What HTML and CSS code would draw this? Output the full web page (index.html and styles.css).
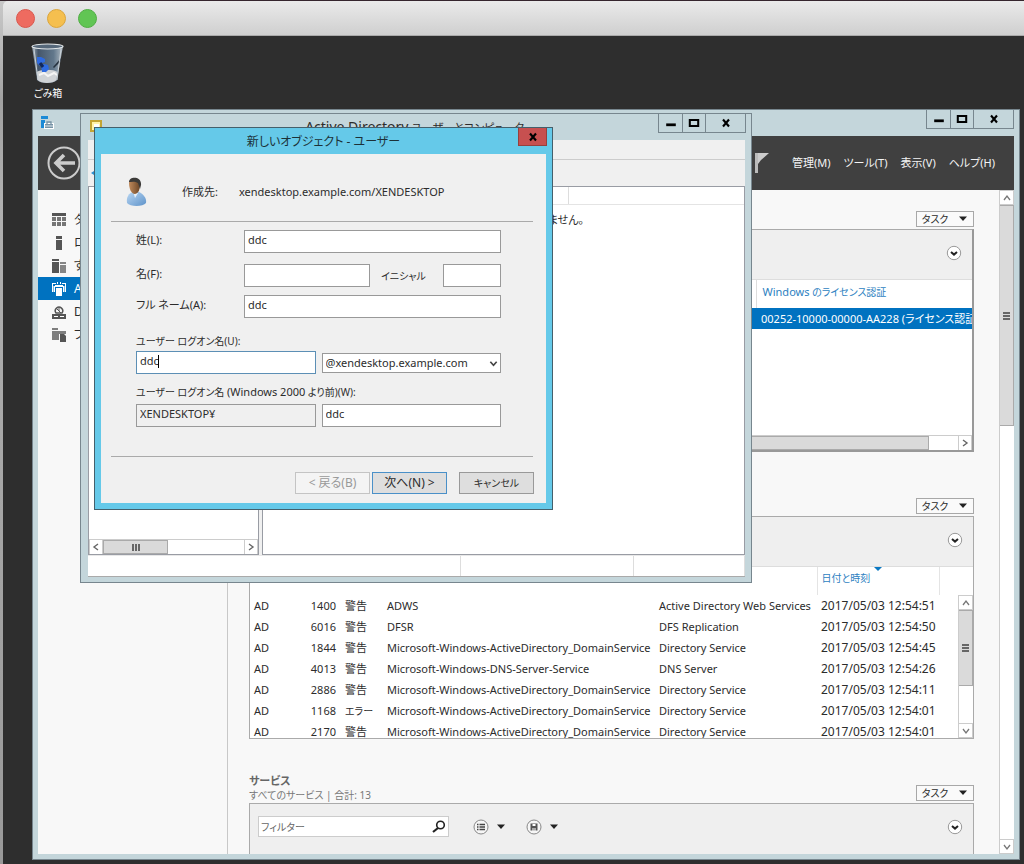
FILE: index.html
```html
<!DOCTYPE html>
<html lang="ja">
<head>
<meta charset="utf-8">
<title>新しいオブジェクト - ユーザー</title>
<link rel="stylesheet" href="styles.css">
</head>
<body>
<svg class="defs" width="0" height="0" aria-hidden="true">
  <symbol id="min" viewBox="0 0 10 10"><path d="M1 6.500h8" stroke="#000" stroke-width="2.300"/></symbol>
  <symbol id="max" viewBox="0 0 10 10"><path d="M1.500 2.500h7v5h-7z" fill="none" stroke="#000" stroke-width="1.700"/></symbol>
  <symbol id="close" viewBox="0 0 10 10"><path d="M2 1.500L8 8.500M8 1.500L2 8.500" stroke="#000" stroke-width="2.100"/></symbol>
  <symbol id="down" viewBox="0 0 10 10"><path d="M2 3l3 4 3-4" fill="none" stroke="#777" stroke-width="1.300"/></symbol>
  <symbol id="up" viewBox="0 0 10 10"><path d="M2 7l3-4 3 4" fill="none" stroke="#777" stroke-width="1.300"/></symbol>
  <symbol id="left" viewBox="0 0 10 10"><path d="M7 2L3 5l4 3" fill="none" stroke="#666" stroke-width="1.400"/></symbol>
  <symbol id="right" viewBox="0 0 10 10"><path d="M3 2l4 3-4 3" fill="none" stroke="#666" stroke-width="1.400"/></symbol>
  <symbol id="tri" viewBox="0 0 10 6"><path d="M1 0.500h8L5 5z" fill="#222"/></symbol>
  <symbol id="expand" viewBox="0 0 16 16"><circle cx="8" cy="8" r="6.700" fill="#fff" stroke="#999"/><path d="M5 7l3 2.600L11 7" fill="none" stroke="#222" stroke-width="2"/></symbol>
</svg>

<header class="macbar"><i class="dot red"></i><i class="dot yellow"></i><i class="dot green"></i></header>

<main class="desktop">
  <div class="trash">
    <svg width="34" height="42" viewBox="0 0 34 42">
      <defs><linearGradient id="bin" x2="1"><stop offset="0" stop-color="#a7b4bf"/><stop offset=".2" stop-color="#45566a"/><stop offset=".7" stop-color="#62788c"/><stop offset="1" stop-color="#b4bec6"/></linearGradient></defs>
      <path d="M1 3l5 34c3 4 17 4 20 0L32 3z" fill="url(#bin)"/>
      <path d="M5.500 29c5-3 17-3 21 0l-1 8c-3 4-16 4-19 0z" fill="#d0d3d6"/>
      <path d="M8 32l5-2 4 3 6-3 3 2" fill="none" stroke="#f4f4f4" stroke-width="2"/>
      <path d="M6 14l4 0 4 2v3l-3 1-2 3-3-3zM10 22l3-1 4 1 1 4-3 3h-4z" fill="#2f6be0"/><path d="M9 20l3 4" stroke="#10275c" stroke-width="3"/>
      <path d="M22 24l8-9-1 4-6 6z" fill="#26323f"/>
      <ellipse cx="16.500" cy="3.500" rx="15.500" ry="2.500" fill="#56687a" stroke="#e4e8ea" stroke-width="1.200"/>
      <path d="M3 6l4 31M30 6l-4 31" stroke="#c8d0d6" stroke-width="1"/>
    </svg>
    <span>ごみ箱</span>
  </div>

  <section class="win server">
    <div class="titlebar">
      <svg width="14" height="14" viewBox="0 0 14 14"><path d="M1 1h7v3H1zM1 5h4v8H1z" fill="#1c8ad6"/><path d="M4 8h10v6H4z" fill="#fff"/><path d="M5 9h8v4H5z" fill="#7793a5"/><path d="M7 9V7h4v2" fill="none" stroke="#7793a5" stroke-width="1.300"/><path d="M5 11h8" stroke="#dde7ec"/></svg>
      <div class="winbtns">
        <button aria-label="最小化"><svg width="12" height="12"><use href="#min"/></svg></button><button aria-label="最大化"><svg width="12" height="12"><use href="#max"/></svg></button><button class="wide" aria-label="閉じる"><svg width="10" height="10"><use href="#close"/></svg></button>
      </div>
    </div>
    <div class="navbar">
      <button class="back" aria-label="戻る"><svg width="34" height="34" viewBox="0 0 34 34"><circle cx="17" cy="17" r="15.500" fill="none" stroke="#ccc" stroke-width="2"/><path d="M28 17H9M17 9l-8 8 8 8" fill="none" stroke="#ccc" stroke-width="3.600"/></svg></button>
      <nav>
        <svg width="16" height="22" viewBox="0 0 16 22"><path d="M1 1h3v20H1z" fill="#bbb"/><path d="M4 1h11L7 8l-3 4z" fill="#ccc"/></svg>
        <a href="#">管理(M)</a><a href="#">ツール(T)</a><a href="#">表示(V)</a><a href="#">ヘルプ(H)</a>
      </nav>
    </div>
    <div class="body">
      <aside>
        <a href="#"><svg viewBox="0 0 14 14"><path d="M0 0h14v3H0z"/><path d="M0 4h4v4H0zM5 4h4v4H5zM10 4h4v4h-4zM0 9h4v4H0zM5 9h4v4H5zM10 9h4v4h-4z" opacity=".8"/></svg>ダ</a>
        <a href="#"><svg viewBox="0 0 14 14"><path d="M4 0h6v3H4zM4 4h6v10H4z"/></svg>ロ</a>
        <a href="#"><svg viewBox="0 0 14 14"><path d="M0 0h7v2H0zM0 3h7v11H0z"/><path d="M8 3h6v2H8zM8 6h6v8H8z" opacity=".7"/></svg>す</a>
        <a href="#" class="on"><svg viewBox="0 0 14 14"><path d="M3 3h8v2H3zM4 6h6v8H4z"/><path d="M0 1h4v1H1v8H0zM14 1h-4v1h3v8h1zM1.500 4H3v6H1.500zM11 4h1.500v6H11zM5 0h1v2H5zM8 0h1v2H8z"/></svg>A</a>
        <a href="#"><svg viewBox="0 0 14 14"><path d="M0 9h14v5H0z"/><path d="M4 8a3.700 3.700 0 1 1 6 0z" fill="none" stroke="#555" stroke-width="1.500"/><path d="M5 4l4 4M7 2v4" stroke="#555"/><path d="M2 11.500h4M8 11.500h4" stroke="#fff"/></svg>D</a>
        <a href="#"><svg viewBox="0 0 14 14"><path d="M0 0h6v2H0zM0 3h14v3H7v6H0z" opacity=".75"/><path d="M8 6h4l2 2v6H8z"/></svg>フ</a>
      </aside>
      <div class="content">
        <section class="tile">
          <div class="tilehead"><button class="task">タスク<svg width="10" height="6"><use href="#tri"/></svg></button></div>
          <div class="panel thick">
            <div class="tools"><button class="round" aria-label="展開"><svg width="16" height="16"><use href="#expand"/></svg></button></div>
            <table class="license"><colgroup><col><col class="c-lic"></colgroup>
              <thead><tr><th></th><th><span class="latin">Windows</span> のライセンス認証</th></tr></thead>
              <tbody><tr><td></td><td><span class="latin">00252-10000-00000-AA228</span> (ライセンス認証</td></tr></tbody></table>
            <div class="hbar"><i class="thumb grow"></i><i class="track"></i><button aria-label="右"><svg width="10" height="10"><use href="#right"/></svg></button></div>
          </div>
        </section>
        <section class="tile">
          <div class="tilehead"><button class="task">タスク<svg width="10" height="6"><use href="#tri"/></svg></button></div>
          <div class="panel">
            <div class="tools"><button class="round" aria-label="展開"><svg width="16" height="16"><use href="#expand"/></svg></button></div>
            <div class="scroller">
            <table class="events"><colgroup><col class="c1"><col class="c2"><col class="c3"><col class="c4"><col class="c5"><col class="c6"><col></colgroup>
              <thead><tr><th></th><th></th><th></th><th></th><th></th><th class="date">日付と時刻<svg class="sort" width="8" height="5"><path d="M0 0h8L4 4z" fill="#0a78c2"/></svg></th><th class="end"></th></tr></thead>
              <tbody>
              <tr><td>AD</td><td>1400</td><td>警告</td><td>ADWS</td><td>Active Directory Web Services</td><td>2017/05/03 12:54:51</td><td></td></tr>
              <tr><td>AD</td><td>6016</td><td>警告</td><td>DFSR</td><td>DFS Replication</td><td>2017/05/03 12:54:50</td><td></td></tr>
              <tr><td>AD</td><td>1844</td><td>警告</td><td>Microsoft-Windows-ActiveDirectory_DomainService</td><td>Directory Service</td><td>2017/05/03 12:54:45</td><td></td></tr>
              <tr><td>AD</td><td>4013</td><td>警告</td><td>Microsoft-Windows-DNS-Server-Service</td><td>DNS Server</td><td>2017/05/03 12:54:26</td><td></td></tr>
              <tr><td>AD</td><td>2886</td><td>警告</td><td>Microsoft-Windows-ActiveDirectory_DomainService</td><td>Directory Service</td><td>2017/05/03 12:54:11</td><td></td></tr>
              <tr><td>AD</td><td>1168</td><td class="jp">エラー</td><td>Microsoft-Windows-ActiveDirectory_DomainService</td><td>Directory Service</td><td>2017/05/03 12:54:01</td><td></td></tr>
              <tr><td>AD</td><td>2170</td><td>警告</td><td>Microsoft-Windows-ActiveDirectory_DomainService</td><td>Directory Service</td><td>2017/05/03 12:54:01</td><td></td></tr>
              </tbody></table>
            <div class="vbar inner"><button aria-label="上"><svg width="10" height="10"><use href="#up"/></svg></button><i class="thumb"><b class="grip"></b></i><i class="track"></i><button aria-label="下"><svg width="10" height="10"><use href="#down"/></svg></button></div>
            </div>
          </div>
        </section>
        <section class="tile">
          <div class="tilehead"><div><h2>サービス</h2><p>すべてのサービス | 合計: 13</p></div><button class="task">タスク<svg width="10" height="6"><use href="#tri"/></svg></button></div>
          <div class="panel">
            <div class="tools filter">
              <label class="search"><input type="text" placeholder="フィルター" aria-label="フィルター"><svg width="14" height="14" viewBox="0 0 14 14"><circle cx="8.500" cy="5" r="3.800" fill="none" stroke="#222" stroke-width="1.600"/><path d="M6 8l-5 4" stroke="#222" stroke-width="2.200"/></svg></label>
              <button class="menu" aria-label="一覧"><svg width="16" height="16" viewBox="0 0 16 16"><circle cx="8" cy="8" r="7" fill="#f6f6f6" stroke="#888"/><path d="M4 5.500h1.500M4 8h1.500M4 10.500h1.500M6.500 5.500H12M6.500 8H12M6.500 10.500H12" stroke="#444" stroke-width="1.300"/></svg><svg width="10" height="6"><use href="#tri"/></svg></button>
              <button class="menu" aria-label="保存"><svg width="16" height="16" viewBox="0 0 16 16"><circle cx="8" cy="8" r="7" fill="#f6f6f6" stroke="#888"/><path d="M4.500 4.500h7v7h-7z" fill="#555"/><path d="M6.500 5h3v2h-3zM6.500 9h1v3h-1zM8.500 9h1v3h-1z" fill="#fff"/></svg><svg width="10" height="6"><use href="#tri"/></svg></button>
              <button class="round" aria-label="展開"><svg width="16" height="16"><use href="#expand"/></svg></button>
            </div>
          </div>
        </section>
      </div>
      <div class="vbar"><button aria-label="上"><svg width="10" height="10"><use href="#up"/></svg></button><i class="thumb"><b class="grip"></b></i><i class="track"></i><button aria-label="下"><svg width="10" height="10"><use href="#down"/></svg></button></div>
    </div>
  </section>

  <section class="win directory">
    <div class="titlebar">
      <svg width="12" height="12" viewBox="0 0 12 12"><path d="M1 1h10v10H1z" fill="#fff3a8" stroke="#c4a534" stroke-width="2"/><path d="M4 4h5v3H4z" fill="#fff"/></svg>
      <h1><span class="latin">Active Directory</span> ユーザーとコンピューター</h1>
      <div class="winbtns">
        <button aria-label="最小化"><svg width="12" height="12"><use href="#min"/></svg></button><button aria-label="最大化"><svg width="12" height="12"><use href="#max"/></svg></button><button class="wide" aria-label="閉じる"><svg width="10" height="10"><use href="#close"/></svg></button>
      </div>
    </div>
    <div class="strip menus"></div>
    <div class="strip bar"><svg width="8" height="10" viewBox="0 0 8 10"><path d="M0 5l6-4v8z" fill="#2a8fd0"/></svg></div>
    <div class="panes">
      <div class="tree"><div class="hbar"><button aria-label="左"><svg width="10" height="10"><use href="#left"/></svg></button><i class="thumb"><b class="grip v"></b></i><i class="track"></i><button aria-label="右"><svg width="10" height="10"><use href="#right"/></svg></button></div></div>
      <div class="list"><div class="listhead"></div><p>ません。</p></div>
    </div>
    <div class="status"><i></i><i></i><i></i></div>
  </section>

  <section class="dialog" role="dialog" aria-label="新しいオブジェクト - ユーザー">
    <div class="dtitle"><h1>新しいオブジェクト - ユーザー</h1><button class="dclose" aria-label="閉じる"><svg width="10" height="10"><use href="#close"/></svg></button></div>
    <form class="dbody">
      <div class="where">
        <svg width="24" height="30" viewBox="0 0 24 30">
          <defs><linearGradient id="shirt" x2="1" y2="1"><stop offset="0" stop-color="#b9d6f2"/><stop offset="1" stop-color="#5e93ca"/></linearGradient><linearGradient id="skin" x2="1"><stop offset="0" stop-color="#c08a5c"/><stop offset="1" stop-color="#6b4526"/></linearGradient></defs>
          <path d="M2 26c-1-6 2-10 6-11h6c4 2 8 6 7 11-3 4-16 4-19 0z" fill="url(#shirt)"/>
          <path d="M8 14l2 7 3-5z" fill="#e8f1fa"/>
          <path d="M4 6c0-5 10-6 11 0 0 6-1 10-5 11-4 0-6-6-6-11z" fill="url(#skin)"/>
          <path d="M4 5C4-1 17-1 16 8l-1 4-2-6C10 4 6 5 4 5z" fill="#3c3a38"/>
        </svg>
        <span class="wl">作成先:</span><span class="en">xendesktop.example.com/XENDESKTOP</span>
      </div>
      <div class="fields">
        <div class="row"><label for="sn">姓(L):</label><input id="sn" type="text" value="ddc"></div>
        <div class="row second"><label for="gn">名(F):</label><input id="gn" type="text"><label for="ini" class="ini">イニシャル</label><input id="ini" class="short" type="text"></div>
        <div class="row"><label for="fn">フル ネーム(A):</label><input id="fn" type="text" value="ddc"></div>
        <label class="over" for="logon">ユーザー ログオン名(U):</label>
        <div class="pair"><span class="caretbox"><input id="logon" class="focus" type="text" value="ddc"><i class="caret"></i></span><span class="combo"><select aria-label="ドメイン"><option>@xendesktop.example.com</option></select><svg width="9" height="9" viewBox="0 0 10 10"><path d="M1.500 3L5 7l3.500-4" fill="none" stroke="#444" stroke-width="1.800"/></svg></span></div>
        <label class="over" for="old">ユーザー ログオン名 <span class="en">(Windows 2000</span> より前)(W):</label>
        <div class="pair"><input class="ro" type="text" value="XENDESKTOP¥" readonly aria-label="NetBIOS ドメイン"><input id="old" type="text" value="ddc"></div>
      </div>
      <div class="actions"><button type="button" disabled>&lt; 戻る(B)</button><button type="button" class="primary">次へ(N) &gt;</button><button type="button" class="cancel">キャンセル</button></div>
    </form>
  </section>
</main>
</body>
</html>
```
FILE: styles.css
```css
* { box-sizing: border-box; }
html, body { height: 100%; }
body {
  margin: 0;
  padding: 1px 0 0 3px;
  display: flex;
  flex-direction: column;
  overflow: hidden;
  background: linear-gradient(#35252d 1px, #c8c8c8 1px, #b4b4b4 60px, #a2a2a2 100px, #b0b0b0 200px, #999);
  font: 12px/16px "Noto Sans", "Noto Sans CJK JP", sans-serif;
  font-feature-settings: "palt";
  color: #2c2c2c;
}
h1, h2, p { margin: 0; font-weight: 400; }
button, input, select { font: inherit; font-feature-settings: inherit; color: inherit; margin: 0; padding: 0; border-radius: 0; }
button { display: flex; align-items: center; justify-content: center; background: none; border: 0; }
a { color: inherit; text-decoration: none; }
svg { display: block; flex: none; }
.defs { position: absolute; }
.en { font-size: 11px; }

.macbar {
  flex: none;
  height: 35px;
  display: flex;
  align-items: center;
  gap: 12px;
  padding-left: 13px;
  border-radius: 5px 0 0 0;
  background: linear-gradient(#eaeaea, #cfcfcf);
  border-bottom: 1px solid #aaa;
}
.dot { width: 19px; height: 19px; border-radius: 50%; border: 1px solid; }
.red { background: #ee6b60; border-color: #d9574d; }
.yellow { background: #f5bf4f; border-color: #dba53b; }
.green { background: #61c554; border-color: #4fae43; }

.desktop { flex: 1; position: relative; background: #2e2e2e; overflow: hidden; }
.trash { width: 60px; margin: 7px 0 0 15px; display: flex; flex-direction: column; align-items: center; font-size: 10px; color: #fff; }

.win { position: absolute; display: flex; flex-direction: column; background: #c4d6db; border: 1px solid #77868e; }
.titlebar { display: flex; align-items: flex-start; justify-content: space-between; flex: none; }
.winbtns { display: flex; border: 1px solid #77868e; border-top: 0; }
.winbtns button { width: 23px; height: 18px; }
.winbtns button + button { border-left: 1px solid #77868e; }
.winbtns .wide { width: 40px; }

/* server manager */
.server { left: 29px; top: 73px; right: 4px; bottom: 4px; padding: 0 5px 5px; }
.server .titlebar { height: 26px; }
.server .titlebar > svg { margin: 5px 0 0 2px; }
.navbar { flex: none; height: 54px; display: flex; align-items: center; justify-content: space-between; background: #404040; padding: 0 19px 0 9px; }
.navbar nav { display: flex; align-items: center; gap: 13px; font-size: 11px; color: #f4f4f4; }
.navbar nav svg { margin-right: 9px; }
.body { flex: 1; min-height: 0; display: flex; background: #f8f8f8; }
aside { flex: none; width: 190px; border-right: 1px solid #c8c8c8; padding-top: 18px; overflow: hidden; }
aside a { display: flex; align-items: center; gap: 8px; height: 23px; padding-left: 14px; }
aside svg { width: 14px; height: 14px; fill: #555; }
aside .on { background: #0072c0; color: #fff; }
aside .on svg { fill: #fff; }
.content { flex: 1; min-width: 0; overflow: hidden; padding: 9px 25px 0 21px; }
.tile { margin-bottom: 33px; }
.tilehead { height: 30px; display: flex; justify-content: flex-end; align-items: flex-end; padding-bottom: 2px; }
.tilehead > div { flex: 1; align-self: flex-start; color: #777; }
.tilehead h2 { font-size: 11px; line-height: 15px; font-weight: 700; color: #666; }
.tilehead p { font-size: 10px; line-height: 15px; }
.task { width: 58px; height: 16px; gap: 10px; border: 1px solid #a8a8a8; background: #fafafa; font-size: 10px; line-height: 14px; }
.panel { height: 223px; background: #fff; border: 1px solid #aaa; display: flex; flex-direction: column; }
.tile .panel { margin-bottom: 34px; }
.tile { margin-bottom: 0; }
.thick { border-right: 2px solid #999; border-bottom: 2px solid #999; }
.tools { flex: none; height: 50px; display: flex; align-items: center; justify-content: flex-end; background: #efefef; border-bottom: 1px solid #ddd; padding: 0 10px 4px 8px; }
table { border-collapse: collapse; table-layout: fixed; width: 100%; }
th, td { padding: 0; text-align: left; font-weight: 400; white-space: nowrap; overflow: hidden; }
.license { flex: none; font-size: 10px; }
.license .latin { font-size: 11px; }
.c-lic { width: 216px; }
.license th { height: 28px; color: #2d7fc1; padding: 0 0 5px 6px; border-left: 1px solid #ddd; }
.license th:first-child { border-left: 0; }
.license tbody { background: #0072c0; color: #fff; }
.license td { height: 21px; padding-left: 5px; font-size: 11px; }
.hbar { display: flex; height: 15px; background: #fff; border-top: 1px solid #ccc; }
.panel > .hbar { margin-top: auto; }
.hbar button { width: 14px; border-left: 1px solid #ccc; border-right: 1px solid #ccc; }
.thumb { display: flex; align-items: center; justify-content: center; background: #dadada; border: 1px solid #aaa; }
.thumb.grow { flex: 1; }
.grow + .track { width: 29px; }
.grip { width: 7px; height: 8px; background: repeating-linear-gradient(#666 0 2px, transparent 2px 3px); }
.grip.v { width: 8px; height: 7px; background: repeating-linear-gradient(90deg, #666 0 2px, transparent 2px 3px); }
.scroller { position: relative; flex: 1; min-height: 0; overflow: hidden; }
.events .c1 { width: 50px; }
.events .c2 { width: 41px; }
.events .c3 { width: 42px; }
.events .c4 { width: 272px; }
.events .c5 { width: 162px; }
.events .c6 { width: 122px; }
.events { font-size: 11px; }
.events .jp { font-size: 10px; }
.events th { height: 28px; }
.events .date { position: relative; padding-bottom: 7px; font-size: 10px; color: #2d7fc1; border-left: 1px solid #e4e4e4; padding-left: 4px; }
.events .end { border-left: 1px solid #e4e4e4; }
.sort { position: absolute; left: 56px; top: 0; }
.events td { height: 21px; padding-left: 4px; }
.events td:nth-child(2) { text-align: right; padding: 0 5px 0 0; }
.events td:nth-child(6) { font-size: 12px; }

.vbar { flex: none; width: 15px; display: flex; flex-direction: column; background: #fff; border-left: 1px solid #ccc; }
.vbar button { flex: none; height: 15px; border: 1px solid #ccc; border-left: 0; }
.vbar .thumb { height: 221px; border-left: 0; }
.vbar .track { flex: 1; }
.vbar.inner { position: absolute; top: 28px; right: 0; bottom: 0; }
.vbar.inner .thumb { height: 76px; }

.filter { height: auto; justify-content: flex-start; padding-top: 12px; padding-bottom: 28px; border-bottom: 0; }
.search { display: flex; align-items: center; width: 191px; height: 21px; background: #fff; border: 1px solid #ccc; padding: 0 2px; margin-right: 24px; }
.search input { flex: 1; min-width: 0; border: 0; outline: 0; font-size: 10px; background: none; }
.search input::placeholder { color: #666; opacity: 1; }
.menu { gap: 7px; margin-right: 20px; }
.filter .round { margin-left: auto; }

/* directory console */
.directory { left: 77px; top: 77px; width: 672px; height: 470px; padding: 0 6px 5px 7px; }
.directory .titlebar { height: 26px; }
.directory .titlebar > svg { margin: 6px 0 0 2px; }
.directory h1 { flex: 1; padding: 3px 0 0 80px; font-size: 11px; line-height: 20px; text-align: center; }
.directory h1 .latin { font-size: 14px; }
.directory .winbtns { margin-right: -1px; }
.strip { flex: none; background: #f0f0f0; }
.menus { height: 20px; border-bottom: 1px solid #ccc; }
.bar { height: 26px; padding: 8px 3px; }
.panes { flex: 1; min-height: 0; display: flex; gap: 3px; background: #f0f0f0; }
.tree { width: 171px; background: #fff; border: 1px solid #999ca4; display: flex; flex-direction: column; justify-content: flex-end; }
.tree .thumb { width: 65px; }
.tree .track { flex: 1; }
.list { flex: 1; background: #fff; border: 1px solid #999ca4; }
.listhead { width: 306px; height: 17px; border-right: 1px solid #ddd; }
.list p { border-top: 1px solid #e4e4e4; padding: 7px 160px 0 0; text-align: right; font-size: 11px; }
.status { flex: none; height: 22px; display: flex; background: #fff; border-bottom: 1px solid #aaa; border-top: 1px solid #e8e8e8; }
.status i { width: 173px; border-right: 1px solid #ddd; }
.status i:first-child { width: auto; flex: 1; }
.status i:last-child { width: 111px; }

/* new user dialog */
.dialog { position: absolute; left: 91px; top: 91px; width: 459px; background: #65c9e9; border: 1px solid #44606c; padding: 0 6px 6px; }
.dtitle { position: relative; height: 26px; }
.dtitle h1 { text-align: center; font-size: 12px; line-height: 28px; color: #1c3138; }
.dclose { position: absolute; right: -1px; top: 0; width: 29px; height: 18px; background: #c75050; border: 1px solid #97403d; border-top: 0; }
.dbody { background: #f0f0f0; padding: 0 13px 9px 10px; }
.where { display: flex; align-items: center; height: 68px; padding: 8px 0 0 14px; border-bottom: 1px solid #aaa; font-size: 11px; }
.wl { width: 57px; margin-left: 33px; }
.fields { padding: 8px 32px 29px 25px; border-bottom: 1px solid #aaa; font-size: 11px; }
.row { display: flex; align-items: center; margin-bottom: 8px; }
.row:first-child { margin-bottom: 11px; }
.row label:first-child { width: 108px; flex: none; padding-bottom: 3px; }
.fields input { flex: 1; min-width: 0; height: 23px; border: 1px solid #999; background: #fff; padding: 0 3px 4px; outline: 0; font-size: 11px; }
.fields .ini { width: 73px; text-align: center; padding-right: 6px; font-size: 10px; }
.fields .short { flex: none; width: 58px; }
.over { display: block; margin-top: 15px; padding-bottom: 2px; font-size: 10px; }
.pair { display: flex; gap: 6px; align-items: center; }
.pair + .over { margin-top: 10px; padding-bottom: 4px; }
.pair > * { flex: 1; min-width: 0; }
.caretbox { position: relative; display: flex; }
.fields .focus { border-color: #5c8fb5; }
.caret { position: absolute; left: 22px; top: 4px; width: 1px; height: 13px; background: #000; }
.fields .ro { background: #f0f0f0; }
.combo { position: relative; display: flex; }
.combo select { appearance: none; width: 100%; height: 20px; border: 1px solid #999; background: #fff; padding: 0 3px; font-size: 11px; }
.combo svg { position: absolute; right: 3px; top: 6px; }
.actions { display: flex; justify-content: flex-end; gap: 2px; padding-top: 15px; margin-right: -1px; }
.actions button { width: 75px; height: 22px; border: 1px solid #999; background: #dedede; }
.actions button:disabled { color: #999; background: #f4f4f4; border-color: #c4c4c4; }
.actions .primary { border-color: #4a90c8; }
.actions .cancel { margin-left: 10px; font-size: 10px; }
```
